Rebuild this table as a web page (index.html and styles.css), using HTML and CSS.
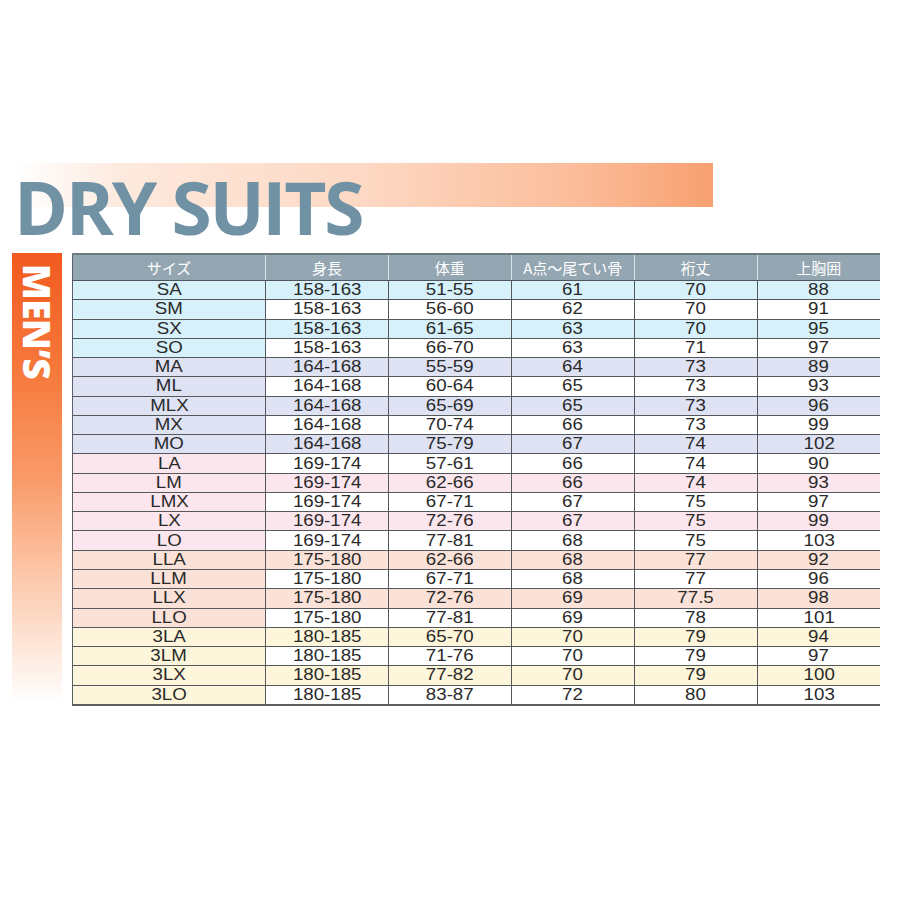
FILE: index.html
```html
<!DOCTYPE html>
<html lang="ja">
<head>
<meta charset="utf-8">
<title>DRY SUITS</title>
<link rel="stylesheet" href="styles.css">
</head>
<body>
<div class="page">
  <div class="hero">
    <div class="band"></div>
    <h1 class="title">DRY SUITS</h1>
  </div>
  <div class="main">
    <div class="side"><span class="side-text">MEN’S</span></div>
    <table class="sizes">
      <thead>
        <tr><th>サイズ</th><th>身長</th><th>体重</th><th>A点～尾てい骨</th><th>裄丈</th><th>上胸囲</th></tr>
      </thead>
      <tbody>
        <tr class="g-s"><td><span>SA</span></td><td><span>158-163</span></td><td><span>51-55</span></td><td><span>61</span></td><td><span>70</span></td><td><span>88</span></td></tr>
        <tr class="g-s"><td><span>SM</span></td><td><span>158-163</span></td><td><span>56-60</span></td><td><span>62</span></td><td><span>70</span></td><td><span>91</span></td></tr>
        <tr class="g-s"><td><span>SX</span></td><td><span>158-163</span></td><td><span>61-65</span></td><td><span>63</span></td><td><span>70</span></td><td><span>95</span></td></tr>
        <tr class="g-s"><td><span>SO</span></td><td><span>158-163</span></td><td><span>66-70</span></td><td><span>63</span></td><td><span>71</span></td><td><span>97</span></td></tr>
        <tr class="g-m"><td><span>MA</span></td><td><span>164-168</span></td><td><span>55-59</span></td><td><span>64</span></td><td><span>73</span></td><td><span>89</span></td></tr>
        <tr class="g-m"><td><span>ML</span></td><td><span>164-168</span></td><td><span>60-64</span></td><td><span>65</span></td><td><span>73</span></td><td><span>93</span></td></tr>
        <tr class="g-m"><td><span>MLX</span></td><td><span>164-168</span></td><td><span>65-69</span></td><td><span>65</span></td><td><span>73</span></td><td><span>96</span></td></tr>
        <tr class="g-m"><td><span>MX</span></td><td><span>164-168</span></td><td><span>70-74</span></td><td><span>66</span></td><td><span>73</span></td><td><span>99</span></td></tr>
        <tr class="g-m"><td><span>MO</span></td><td><span>164-168</span></td><td><span>75-79</span></td><td><span>67</span></td><td><span>74</span></td><td><span>102</span></td></tr>
        <tr class="g-l"><td><span>LA</span></td><td><span>169-174</span></td><td><span>57-61</span></td><td><span>66</span></td><td><span>74</span></td><td><span>90</span></td></tr>
        <tr class="g-l"><td><span>LM</span></td><td><span>169-174</span></td><td><span>62-66</span></td><td><span>66</span></td><td><span>74</span></td><td><span>93</span></td></tr>
        <tr class="g-l"><td><span>LMX</span></td><td><span>169-174</span></td><td><span>67-71</span></td><td><span>67</span></td><td><span>75</span></td><td><span>97</span></td></tr>
        <tr class="g-l"><td><span>LX</span></td><td><span>169-174</span></td><td><span>72-76</span></td><td><span>67</span></td><td><span>75</span></td><td><span>99</span></td></tr>
        <tr class="g-l"><td><span>LO</span></td><td><span>169-174</span></td><td><span>77-81</span></td><td><span>68</span></td><td><span>75</span></td><td><span>103</span></td></tr>
        <tr class="g-ll"><td><span>LLA</span></td><td><span>175-180</span></td><td><span>62-66</span></td><td><span>68</span></td><td><span>77</span></td><td><span>92</span></td></tr>
        <tr class="g-ll"><td><span>LLM</span></td><td><span>175-180</span></td><td><span>67-71</span></td><td><span>68</span></td><td><span>77</span></td><td><span>96</span></td></tr>
        <tr class="g-ll"><td><span>LLX</span></td><td><span>175-180</span></td><td><span>72-76</span></td><td><span>69</span></td><td><span>77.5</span></td><td><span>98</span></td></tr>
        <tr class="g-ll"><td><span>LLO</span></td><td><span>175-180</span></td><td><span>77-81</span></td><td><span>69</span></td><td><span>78</span></td><td><span>101</span></td></tr>
        <tr class="g-3l"><td><span>3LA</span></td><td><span>180-185</span></td><td><span>65-70</span></td><td><span>70</span></td><td><span>79</span></td><td><span>94</span></td></tr>
        <tr class="g-3l"><td><span>3LM</span></td><td><span>180-185</span></td><td><span>71-76</span></td><td><span>70</span></td><td><span>79</span></td><td><span>97</span></td></tr>
        <tr class="g-3l"><td><span>3LX</span></td><td><span>180-185</span></td><td><span>77-82</span></td><td><span>70</span></td><td><span>79</span></td><td><span>100</span></td></tr>
        <tr class="g-3l"><td><span>3LO</span></td><td><span>180-185</span></td><td><span>83-87</span></td><td><span>72</span></td><td><span>80</span></td><td><span>103</span></td></tr>
      </tbody>
    </table>
  </div>
</div>
</body>
</html>
```
FILE: styles.css
```css
html, body {
  margin: 0;
  padding: 0;
  background: #ffffff;
}

.page {
  width: 900px;
  height: 900px;
  padding-top: 163px;
  box-sizing: border-box;
}

.hero {
  position: relative;
  height: 90px;
}

.band {
  position: absolute;
  left: 15px;
  top: 0;
  width: 698px;
  height: 44px;
  background: linear-gradient(to right, rgba(255,255,255,1) 0%, #fde9dd 16%, #fdd8c3 50%, #fbbd9b 80%, #f8a070 100%);
}

.title {
  position: relative;
  margin: 0;
  padding-left: 14px;
  padding-top: 4px;
  font-family: "Open Sans", "Noto Sans", sans-serif;
  font-weight: 700;
  font-size: 73px;
  line-height: 80px;
  letter-spacing: -2.3px;
  color: #7092a4;
}

.main {
  display: flex;
  gap: 10px;
  padding-left: 12px;
}

.side {
  width: 50px;
  height: 450px;
  background: linear-gradient(to bottom, #f15a1f 0%, #f6773a 25%, #f99a68 50%, #fcc4a5 70%, #fee7da 88%, #ffffff 100%);
  display: flex;
  justify-content: center;
  padding-top: 11px;
  box-sizing: border-box;
}

.side-text {
  writing-mode: vertical-rl;
  font-family: "Open Sans", "Noto Sans", sans-serif;
  font-weight: 800;
  font-size: 37px;
  line-height: 37px;
  color: #ffffff;
  letter-spacing: -0.5px;
}

.sizes {
  width: 808px;
  border-collapse: collapse;
  table-layout: fixed;
  font-family: "Liberation Sans", Arial, sans-serif;
  color: #2a2a2a;
  border-top: 2px solid #6e7a82;
  border-bottom: 2px solid #5a5f63;
  border-left: 1px solid #5a5f63;
}

.sizes th {
  height: 25px;
  padding: 0;
  background: #94a6b2;
  color: #ffffff;
  font-family: "Noto Sans CJK JP", "Noto Sans", sans-serif;
  font-weight: 400;
  font-size: 15px;
  line-height: 20px;
  border-left: 1px solid #dde4e8;
  border-bottom: 1px solid #4f5559;
}

.sizes th:first-child {
  width: 192px;
  border-left: 1px solid #5a5f63;
}

.sizes td {
  height: 18.27px;
  padding: 0;
  text-align: center;
  font-size: 17px;
  line-height: 18px;
  border-bottom: 1px solid #55595c;
  border-left: 1px solid #55595c;
}

.sizes td:first-child {
  border-left: 1px solid #5a5f63;
}

.sizes td span {
  display: inline-block;
  transform: scaleX(1.1);
}

.g-s td { background: #d6f1fa; }
.g-m td { background: #dee2f3; }
.g-l td { background: #fce6ee; }
.g-ll td { background: #fbe2d8; }
.g-3l td { background: #fdf6da; }

.sizes tbody tr:nth-child(even) td + td {
  background: #ffffff;
}
```
